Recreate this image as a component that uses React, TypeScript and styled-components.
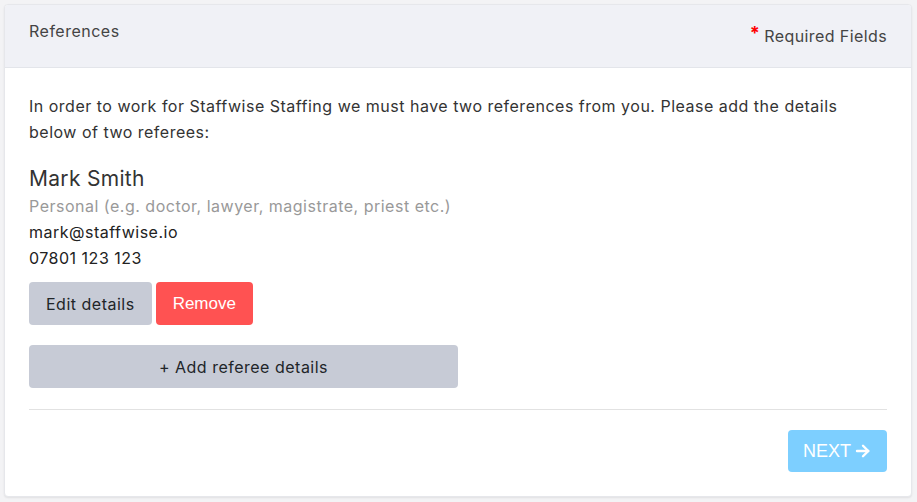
import { createGlobalStyle, styled } from "styled-components";

const GlobalStyle = createGlobalStyle`
    html, body {
        margin: 0;
        padding: 0;
        background: #f3f3f5;
    }
    body {
        font-family: Inter, "Noto Sans", sans-serif;
        letter-spacing: 0.5px;
        color: #212529;
    }
    * { box-sizing: border-box; }
`;

const Page = styled.div`
    padding: 4px 5px 5px 4px;
`;

const Card = styled.div`
    background: #fff;
    border: 1px solid #e6e7eb;
    border-radius: 4px;
    box-shadow: 0 1px 2px rgba(0, 0, 0, 0.08);
    overflow: hidden;
`;

const Header = styled.div`
    display: flex;
    justify-content: space-between;
    height: 63px;
    padding: 0 24px;
    background: #f0f1f6;
    border-bottom: 1px solid #e3e5ea;
    font-size: 16px;
    color: #444;
`;

const Title = styled.div`
    padding-top: 16px;
`;

const Required = styled.div`
    padding-top: 21px;
    display: flex;
    align-items: flex-start;
    gap: 4px;
    letter-spacing: 0.4px;
`;

const Star = styled.span`
    color: #ff0000;
    font-weight: 700;
    font-size: 18px;
    line-height: 1;
    margin-top: -2px;
`;

const Body = styled.div`
    padding: 25px 24px 24px 24px;
`;

const Intro = styled.p`
    margin: 0;
    font-size: 16px;
    line-height: 26px;
    color: #333;
`;

const Referee = styled.div`
    margin-top: 20px;
    display: flex;
    flex-direction: column;
`;

const Name = styled.div`
    font-size: 21px;
    line-height: 28px;
    letter-spacing: 0.3px;
    color: #333;
`;

const Line = styled.div<{ $muted?: boolean }>`
    font-size: 16px;
    line-height: 26px;
    color: ${({ $muted }) => ($muted ? "#999" : "#222")};
`;

const Actions = styled.div`
    display: flex;
    gap: 4px;
    margin-top: 11px;
`;

const Button = styled.button<{ $variant?: "grey" | "danger" | "next" }>`
    height: 43px;
    border: none;
    border-radius: 4px;
    font-size: 16px;
    padding: 0 17px;
    cursor: pointer;
    letter-spacing: ${({ $variant }) => ($variant === "grey" ? "0.5px" : "0")};
    font-family: ${({ $variant }) =>
        $variant === "grey" ? 'Inter, "Noto Sans", sans-serif' : '"Liberation Sans", Arial, sans-serif'};
    background: ${({ $variant }) =>
        $variant === "danger" ? "#ff5252" : $variant === "next" ? "#7dcfff" : "#c7cbd6"};
    color: ${({ $variant }) => ($variant === "grey" ? "#212529" : "#fff")};
`;

const DangerButton = styled(Button)`
    width: 97px;
    font-size: 17px;
`;

const AddButton = styled(Button)`
    width: 429px;
    margin-top: 20px;
`;

const Divider = styled.hr`
    border: none;
    border-top: 1px solid #e2e2e2;
    margin: 21px 0 20px;
`;

const Footer = styled.div`
    display: flex;
    justify-content: flex-end;
`;

const NextButton = styled(Button)`
    height: 42px;
    width: 99px;
    font-size: 18px;
    display: flex;
    align-items: center;
    justify-content: center;
    gap: 3px;
    padding: 0;
`;

export default function App() {
    return (
        <>
            <GlobalStyle />
            <Page>
                <Card>
                    <Header>
                        <Title>References</Title>
                        <Required>
                            <Star>*</Star>
                            <span>Required Fields</span>
                        </Required>
                    </Header>
                    <Body>
                        <Intro>
                            In order to work for Staffwise Staffing we must have two references from you. Please add the details
                            below of two referees:
                        </Intro>
                        <Referee>
                            <Name>Mark Smith</Name>
                            <Line $muted>Personal (e.g. doctor, lawyer, magistrate, priest etc.)</Line>
                            <Line>mark@staffwise.io</Line>
                            <Line>07801 123 123</Line>
                        </Referee>
                        <Actions>
                            <Button $variant="grey">Edit details</Button>
                            <DangerButton $variant="danger">Remove</DangerButton>
                        </Actions>
                        <AddButton $variant="grey">+ Add referee details</AddButton>
                        <Divider />
                        <Footer>
                            <NextButton $variant="next">
                                NEXT
                                <svg width="18" height="18" viewBox="0 0 24 24" fill="none" stroke="#fff" strokeWidth="3.2" strokeLinecap="round" strokeLinejoin="round">
                                    <path d="M4 12h15" />
                                    <path d="M12 5l7 7-7 7" />
                                </svg>
                            </NextButton>
                        </Footer>
                    </Body>
                </Card>
            </Page>
        </>
    );
}
